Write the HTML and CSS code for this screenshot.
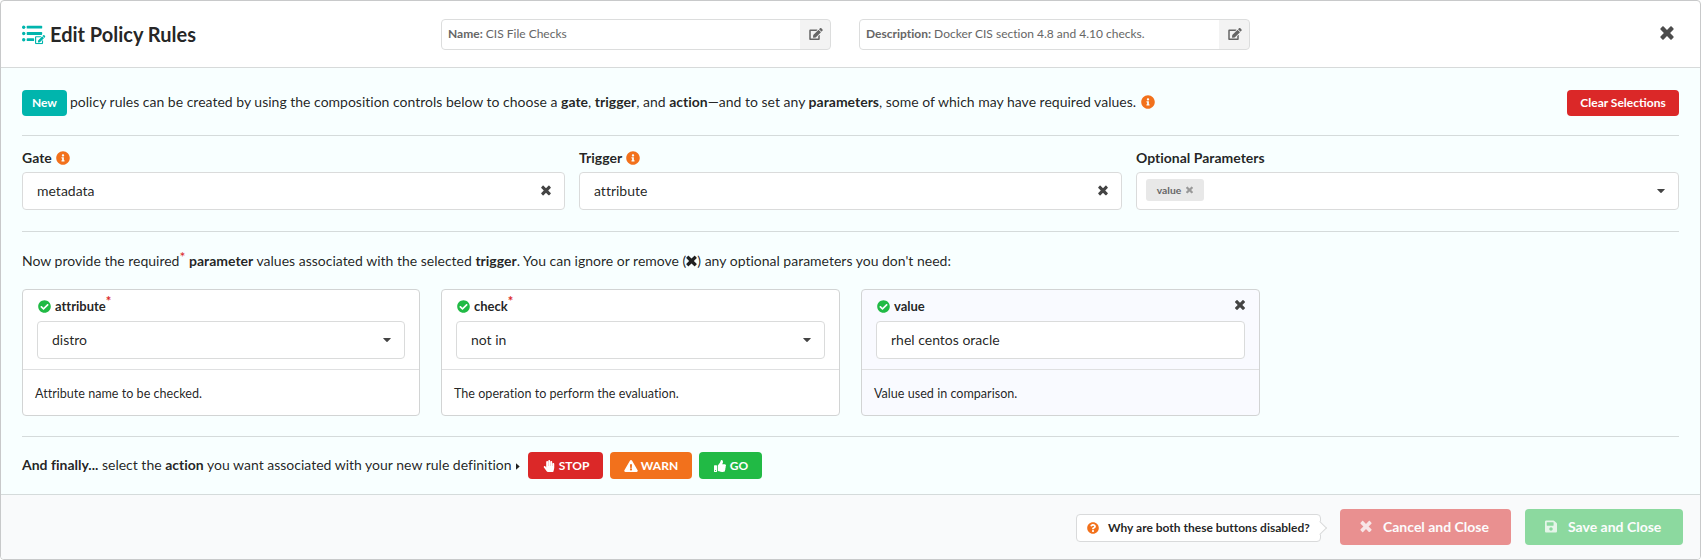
FILE: index.html
```html
<!DOCTYPE html>
<html lang="en">
<head>
<meta charset="utf-8">
<title>Edit Policy Rules</title>
<link rel="stylesheet" href="styles.css">
</head>
<body>
<svg class="sprite" aria-hidden="true">
  <symbol id="times" viewBox="0 0 384 512"><path d="M323.1 441l53.9-53.9c9.4-9.4 9.4-24.5 0-33.9L279.8 256l97.2-97.2c9.4-9.4 9.4-24.5 0-33.9L323.1 71c-9.4-9.4-24.5-9.4-33.9 0L192 168.2 94.8 71c-9.4-9.4-24.5-9.4-33.9 0L7 124.9c-9.4 9.4-9.4 24.5 0 33.9l97.2 97.2L7 353.2c-9.4 9.4-9.4 24.5 0 33.9L60.9 441c9.4 9.4 24.5 9.4 33.9 0l97.2-97.2 97.2 97.2c9.3 9.3 24.5 9.3 33.9 0z"/></symbol>
  <symbol id="info" viewBox="0 0 512 512"><path d="M256 8C119.043 8 8 119.083 8 256c0 136.997 111.043 248 248 248s248-111.003 248-248C504 119.083 392.957 8 256 8zm0 110c23.196 0 42 18.804 42 42s-18.804 42-42 42-42-18.804-42-42 18.804-42 42-42zm56 254c0 6.627-5.373 12-12 12h-88c-6.627 0-12-5.373-12-12v-24c0-6.627 5.373-12 12-12h12v-64h-12c-6.627 0-12-5.373-12-12v-24c0-6.627 5.373-12 12-12h64c6.627 0 12 5.373 12 12v100h12c6.627 0 12 5.373 12 12v24z"/></symbol>
  <symbol id="check" viewBox="0 0 512 512"><path d="M504 256c0 136.967-111.033 248-248 248S8 392.967 8 256 119.033 8 256 8s248 111.033 248 248zM227.314 387.314l184-184c6.248-6.248 6.248-16.379 0-22.627l-22.627-22.627c-6.248-6.249-16.379-6.249-22.628 0L216 308.118l-70.059-70.059c-6.248-6.248-16.379-6.248-22.628 0l-22.627 22.627c-6.248 6.248-6.248 16.379 0 22.627l104 104c6.249 6.249 16.379 6.249 22.628.001z"/></symbol>
  <symbol id="question" viewBox="0 0 512 512"><path d="M504 256c0 136.997-111.043 248-248 248S8 392.997 8 256C8 119.083 119.043 8 256 8s248 111.083 248 248zM262.655 90c-54.497 0-89.255 22.957-116.549 63.758-3.536 5.286-2.353 12.415 2.715 16.258l34.699 26.31c5.205 3.947 12.621 3.008 16.665-2.122 17.864-22.658 30.113-35.797 57.303-35.797 20.429 0 45.698 13.148 45.698 32.958 0 14.976-12.363 22.667-32.534 33.976C247.128 238.528 216 254.941 216 296v4c0 6.627 5.373 12 12 12h56c6.627 0 12-5.373 12-12v-1.333c0-28.462 83.186-29.647 83.186-106.667 0-58.002-60.165-102-116.531-102zM256 338c-25.365 0-46 20.635-46 46 0 25.364 20.635 46 46 46s46-20.636 46-46c0-25.365-20.635-46-46-46z"/></symbol>
  <symbol id="edit" viewBox="0 0 576 512"><path d="M402.6 83.2l90.2 90.2c3.8 3.8 3.8 10 0 13.8L274.4 405.6l-92.8 10.3c-12.4 1.4-22.9-9.1-21.5-21.5l10.3-92.8L388.8 83.2c3.8-3.8 10-3.8 13.8 0zm162-22.9l-48.8-48.8c-15.2-15.2-39.9-15.2-55.2 0l-35.4 35.4c-3.8 3.8-3.8 10 0 13.8l90.2 90.2c3.8 3.8 10 3.8 13.8 0l35.4-35.4c15.2-15.3 15.2-40 0-55.2zM384 346.2V448H64V128h229.8c3.2 0 6.2-1.3 8.5-3.5l40-40c7.6-7.6 2.2-20.5-8.5-20.5H48C21.5 64 0 85.5 0 112v352c0 26.5 21.5 48 48 48h352c26.5 0 48-21.5 48-48V306.2c0-10.7-12.9-16-20.5-8.5l-40 40c-2.2 2.3-3.5 5.3-3.5 8.5z"/></symbol>
  <symbol id="save" viewBox="0 0 448 512"><path d="M433.941 129.941l-83.882-83.882A48 48 0 0 0 316.118 32H48C21.49 32 0 53.49 0 80v352c0 26.51 21.49 48 48 48h352c26.51 0 48-21.49 48-48V163.882a48 48 0 0 0-14.059-33.941zM224 416c-35.346 0-64-28.654-64-64 0-35.346 28.654-64 64-64s64 28.654 64 64c0 35.346-28.654 64-64 64zm96-304.52V212c0 6.627-5.373 12-12 12H76c-6.627 0-12-5.373-12-12V108c0-6.627 5.373-12 12-12h228.52c3.183 0 6.235 1.264 8.485 3.515l3.48 3.48A11.996 11.996 0 0 1 320 111.48z"/></symbol>
  <symbol id="warning" viewBox="0 0 576 512"><path d="M569.517 440.013C587.975 472.007 564.806 512 527.94 512H48.054c-36.937 0-59.999-40.055-41.577-71.987L246.423 23.985c18.467-32.009 64.72-31.951 83.154 0l239.94 416.028zM288 354c-25.405 0-46 20.595-46 46s20.595 46 46 46 46-20.595 46-46-20.595-46-46-46zm-43.673-165.346l7.418 136c.347 6.364 5.609 11.346 11.982 11.346h48.546c6.373 0 11.635-4.982 11.982-11.346l7.418-136c.375-6.874-5.098-12.654-11.982-12.654h-63.383c-6.884 0-12.356 5.78-11.981 12.654z"/></symbol>
  <symbol id="thumb" viewBox="0 0 512 512"><path d="M104 224H24c-13.255 0-24 10.745-24 24v240c0 13.255 10.745 24 24 24h80c13.255 0 24-10.745 24-24V248c0-13.255-10.745-24-24-24zM64 472c-13.255 0-24-10.745-24-24s10.745-24 24-24 24 10.745 24 24-10.745 24-24 24zM384 81.452c0 42.416-25.97 66.208-33.277 94.548h101.723c33.397 0 59.397 27.746 59.553 58.098.084 17.938-7.546 37.249-19.439 49.197l-.11.11c9.836 23.337 8.237 56.037-9.308 79.469 8.681 25.895-.069 57.704-16.382 74.757 4.298 17.598 2.244 32.575-6.148 44.632C440.202 511.587 389.616 512 346.839 512l-2.845-.001c-48.287-.017-87.806-17.598-119.56-31.725-15.957-7.099-36.821-15.887-52.651-16.178-6.54-.12-11.783-5.457-11.783-11.998v-213.77c0-3.2 1.282-6.271 3.558-8.521 39.614-39.144 56.648-80.587 89.117-113.111 14.804-14.832 20.188-37.236 25.393-58.902C282.515 39.293 291.817 0 312 0c24 0 72 8 72 81.452z"/></symbol>
  <symbol id="hand" viewBox="0 0 448 512"><path d="M408.781 128.007C386.356 127.578 368 146.36 368 168.79V256h-8V79.79c0-22.43-18.356-41.212-40.781-40.783C297.488 39.423 280 57.169 280 79v177h-8V40.79C272 18.36 253.644-.422 231.219.007 209.488.423 192 18.169 192 40v216h-8V80.79c0-22.43-18.356-41.212-40.781-40.783C121.488 40.423 104 58.169 104 80v235.992l-31.648-43.519c-12.993-17.866-38.009-21.817-55.877-8.823-17.865 12.994-21.815 38.01-8.822 55.877l125.601 172.705A48 48 0 0 0 172.073 512h197.59c22.274 0 41.622-15.324 46.724-37.006l26.508-112.66a192.011 192.011 0 0 0 5.104-43.975V168c.001-21.831-17.487-39.577-39.218-39.993z"/></symbol>
  <symbol id="caret" viewBox="0 0 8 4"><path d="M.5 0h7q.6.1.2.6L4.500 3.700q-.5.4-1 0L.3.600Q-.1.100.5 0z"/></symbol>
</svg>

<div class="modal">
  <header class="header">
    <div class="brand">
      <svg class="list-icon" viewBox="0 0 24 20">
        <circle cx="1.700" cy="2.200" r="1.700"/><circle cx="1.700" cy="8.500" r="1.700"/><circle cx="1.700" cy="14.700" r="1.700"/>
        <rect x="4.700" y=".8" width="15.500" height="2.800" rx=".7"/><rect x="4.700" y="7.100" width="15.500" height="2.800" rx=".7"/><rect x="4.700" y="13.300" width="7.500" height="2.800" rx=".7"/>
        <path class="halo" d="M12.500 10.300h7l1.200-1.300 3.300 1v10h-11.500z"/>
        <use href="#edit" x="13" y="10" width="10.400" height="9.200"/>
      </svg>
      <h1 class="title">Edit Policy Rules</h1>
    </div>
    <div class="meta">
      <div class="meta-text"><b>Name:</b> CIS File Checks</div>
      <button class="meta-edit"><svg><use href="#edit"/></svg></button>
    </div>
    <div class="meta desc">
      <div class="meta-text"><b>Description:</b> Docker CIS section 4.8 and 4.10 checks.</div>
      <button class="meta-edit"><svg><use href="#edit"/></svg></button>
    </div>
    <svg class="close"><use href="#times"/></svg>
  </header>

  <main class="content">
    <section class="intro">
      <span class="tag">New</span>
      <p class="line intro-line">policy rules can be created by using the composition controls below to choose a <b>gate</b>, <b>trigger</b>, and <b>action</b>—and to set any <b>parameters</b>, some of which may have required values.</p>
      <svg class="info"><use href="#info"/></svg>
      <button class="btn clear">Clear Selections</button>
    </section>

    <section class="selectors">
      <div class="field">
        <div class="label">Gate <svg class="info"><use href="#info"/></svg></div>
        <div class="input"><span>metadata</span><svg class="x"><use href="#times"/></svg></div>
      </div>
      <div class="field">
        <div class="label">Trigger <svg class="info"><use href="#info"/></svg></div>
        <div class="input"><span>attribute</span><svg class="x"><use href="#times"/></svg></div>
      </div>
      <div class="field">
        <div class="label">Optional Parameters</div>
        <div class="input multi"><span class="chip">value <svg><use href="#times"/></svg></span><svg class="caret"><use href="#caret"/></svg></div>
      </div>
    </section>

    <section class="params">
      <p class="line hint">Now provide the required<span class="star">*</span> <b>parameter</b> values associated with the selected <b>trigger</b>. You can ignore or remove (<svg class="inline-x"><use href="#times"/></svg>) any optional parameters you don't need:</p>
      <div class="cards">
        <article class="card">
          <div class="card-main">
            <div class="card-label"><svg><use href="#check"/></svg><b>attribute</b><span class="star">*</span></div>
            <div class="input"><span>distro</span><svg class="caret"><use href="#caret"/></svg></div>
          </div>
          <p class="card-note">Attribute name to be checked.</p>
        </article>
        <article class="card">
          <div class="card-main">
            <div class="card-label"><svg><use href="#check"/></svg><b>check</b><span class="star">*</span></div>
            <div class="input"><span>not in</span><svg class="caret"><use href="#caret"/></svg></div>
          </div>
          <p class="card-note">The operation to perform the evaluation.</p>
        </article>
        <article class="card optional">
          <div class="card-main">
            <div class="card-label"><svg><use href="#check"/></svg><b>value</b><svg class="remove"><use href="#times"/></svg></div>
            <div class="input"><span>rhel centos oracle</span></div>
          </div>
          <p class="card-note">Value used in comparison.</p>
        </article>
      </div>
    </section>

    <section class="actions">
      <p class="line final"><b>And finally...</b> select the <b>action</b> you want associated with your new rule definition</p>
      <svg class="pointer" viewBox="0 0 4 7"><path d="M0 .3v6.400L3.700 3.500z"/></svg>
      <button class="btn stop"><svg><use href="#hand"/></svg>STOP</button>
      <button class="btn warn"><svg><use href="#warning"/></svg>WARN</button>
      <button class="btn go"><svg><use href="#thumb"/></svg>GO</button>
    </section>
  </main>

  <footer class="footer">
    <div class="why"><svg><use href="#question"/></svg><b>Why are both these buttons disabled?</b></div>
    <button class="big cancel" disabled><svg><use href="#times"/></svg>Cancel and Close</button>
    <button class="big save" disabled><svg><use href="#save"/></svg>Save and Close</button>
  </footer>
</div>
</body>
</html>
```
FILE: styles.css
```css
* { box-sizing: border-box; }
body { margin: 0; background: #fff; font-family: Lato, "Liberation Sans", sans-serif; font-size: 14px; line-height: 18px; color: rgba(0,0,0,.87); font-variant-ligatures: none; }
h1, p { margin: 0; }
svg { display: block; flex: none; fill: currentColor; }
button { font-family: inherit; border: 0; padding: 0; }
.sprite { position: absolute; width: 0; height: 0; }

.modal { width: 1701px; height: 560px; border: 1px solid #c8c9ca; border-radius: 4px; overflow: hidden; display: flex; flex-direction: column; }

.header { height: 67px; flex: none; display: flex; align-items: flex-start; padding: 18px 24px 0 21px; border-bottom: 1px solid #d7dada; }
.brand { width: 419px; display: flex; padding-top: 4px; }
.list-icon { width: 24px; height: 20px; margin-top: 2px; color: #00b5ad; }
.halo { fill: #fff; }
.title { font-size: 20px; line-height: 24px; font-weight: 700; margin: -1px 0 0 4px; white-space: nowrap; }
.meta { width: 390px; height: 31px; display: flex; border: 1px solid #dcdddd; border-radius: 4px; overflow: hidden; color: #666; font-size: 12px; }
.desc { margin-left: 28px; width: 391px; }
.meta-text { flex: 1; padding-left: 6px; line-height: 28px; white-space: nowrap; }
.meta-edit { width: 31px; margin: -1px; height: 31px; border: 1px solid #ccc; border-left: 0; border-radius: 0 4px 4px 0; background: #f3f3f3; color: #666; display: flex; align-items: center; justify-content: center; }
.meta-edit svg { width: 14px; height: 12px; margin: -1px 0 0 1px; }
.close { width: 14px; height: 18px; margin: 5px 2px 0 auto; color: #4c4c4c; }

.content { height: 426px; flex: none; padding: 0 21px; background: #f8ffff; }
.line { white-space: nowrap; }
.intro { height: 68px; padding-top: 22px; display: flex; align-items: flex-start; border-bottom: 1px solid #d5dbdb; }
.tag { width: 45px; height: 26px; border-radius: 4px; background: #00b5ad; color: #fff; font-size: 12px; font-weight: 700; line-height: 26px; text-align: center; }
.intro-line { margin: 3px 0 0 3px; }
.info { width: 14px; height: 14px; color: #f2711c; }
.intro .info { margin: 5px 0 0 5px; }
.btn { height: 27px; border-radius: 4px; color: #fff; font-size: 12px; font-weight: 700; display: flex; align-items: center; justify-content: center; }
.clear { width: 112px; height: 26px; margin-left: auto; padding-bottom: 1px; background: #db2828; }

.selectors { height: 96px; padding-top: 13px; display: grid; grid-template-columns: repeat(3, 1fr); gap: 14px; border-bottom: 1px solid #d5dbdb; }
.label { height: 23px; display: flex; align-items: flex-start; gap: 4px; font-weight: 700; white-space: nowrap; }
.label .info { margin-top: 2px; }
.input { height: 38px; display: flex; align-items: center; justify-content: space-between; padding: 0 13px 0 14px; border: 1px solid #dadbdb; border-radius: 4px; background: #fff; }
.x { width: 10px; height: 13px; margin-top: -1px; color: #444; }
.caret { width: 8px; height: 4px; color: #444; }
.multi { padding-left: 9px; }
.chip { height: 22px; width: 58px; display: flex; align-items: center; justify-content: center; gap: 5px; margin-top: -2px; border-radius: 3px; background: #e8e8e8; color: #666; font-size: 10.300px; font-weight: 700; }
.chip svg { width: 7px; height: 10px; color: #999; }

.params { height: 205px; padding-top: 20px; border-bottom: 1px solid #d5dbdb; }
.hint { height: 37px; }
.star { color: #db2828; position: relative; top: -4px; }
.inline-x { display: inline-block; width: 11px; height: 14px; vertical-align: -2px; }
.cards { display: flex; gap: 21px; }
.card { width: 399px; height: 127px; border: 1px solid #d2d4d4; border-radius: 4px; background: #fff; }
.card:first-child { width: 398px; }
.optional { background: #f9faff; }
.card-main { height: 80px; padding: 8px 14px 0; border-bottom: 1px solid #dfe0e1; }
.card-label { height: 23px; display: flex; align-items: flex-start; font-size: 13px; }
.card-label b { margin-top: -1px; }
.card-label svg { width: 13px; height: 13px; margin: 2px 4px 0 1px; color: #21ba45; }
.card-label .star { top: -6px; font-weight: 700; }
.card-label .remove { width: 10px; height: 14px; margin: 0 0 0 auto; color: #444; }
.card-note { padding: 15px 12px; font-size: 12.600px; }

.actions { height: 57px; padding-top: 15px; display: flex; align-items: flex-start; }
.final { margin-top: 4px; width: 491px; }
.pointer { width: 4px; height: 7px; margin: 11px 8px 0 3px; }
.btn svg { height: 12px; width: 14px; margin-right: 3px; }
.stop { width: 75px; background: #db2828; }
.warn { width: 82px; margin-left: 7px; background: #f2711c; }
.go { width: 63px; margin-left: 7px; background: #21ba45; }

.footer { flex: 1; display: flex; align-items: flex-start; justify-content: flex-end; padding: 14px 17px 0 0; border-top: 1px solid #d5dbdb; background: #f9fafb; }
.why { position: relative; width: 245px; height: 28px; margin: 5px 19px 0 0; display: flex; align-items: center; padding-left: 10px; gap: 9px; border: 1px solid #d9dadb; border-radius: 4px; background: #fff; font-size: 12px; white-space: nowrap; }
.why svg { width: 12px; height: 12px; color: #f2711c; }
.why::after { content: ""; position: absolute; right: -5px; top: 8px; width: 9px; height: 9px; border: solid #d9dadb; border-width: 1px 1px 0 0; background: #fff; transform: rotate(45deg); }
.big { height: 36px; border-radius: 4px; color: #fff; opacity: .5; font-size: 14px; font-weight: 700; display: flex; align-items: center; padding: 0 0 1px 20px; }
.big svg { width: 12px; height: 15px; margin-right: 11px; opacity: .8; }
.cancel { width: 171px; background: #db2828; }
.save { width: 158px; margin-left: 14px; background: #21ba45; }
```
